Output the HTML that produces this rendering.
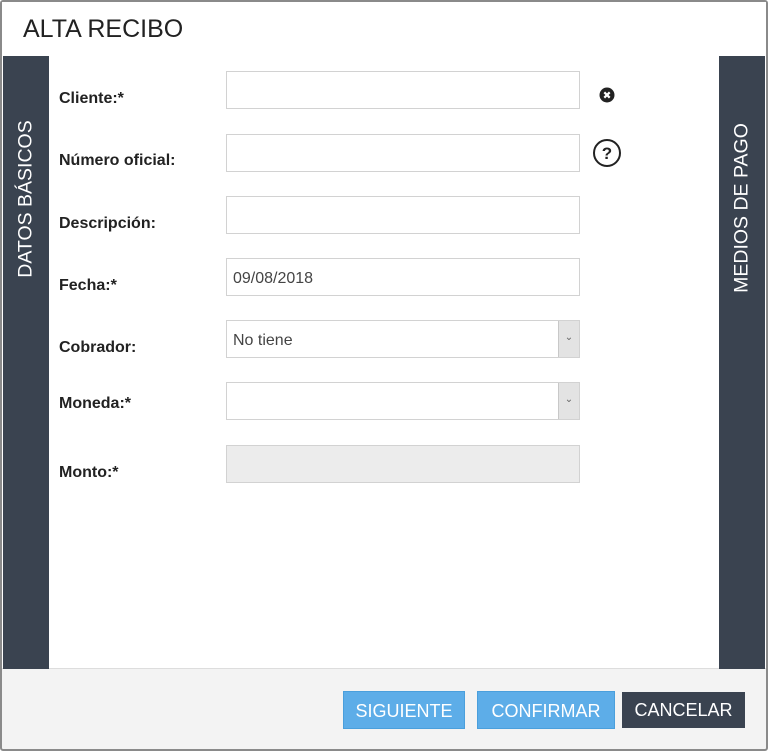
<!DOCTYPE html>
<html><head><style>
*{box-sizing:border-box;margin:0;padding:0}
body{width:768px;height:751px;background:#fff;font-family:"Liberation Sans",sans-serif;position:relative;overflow:hidden}
.win{position:absolute;left:0;top:0;width:768px;height:751px;border:2px solid #8a8a8a;border-radius:3px;background:#f3f3f3}
.hdr{position:absolute;left:0;top:0;width:764px;height:55px;background:#fff;border-bottom:1px solid #e6e6e6}
.hdr span{position:absolute;left:21px;top:13px;font-size:25px;color:#222}
.main{position:absolute;left:2px;top:55px;width:764px;height:614px;background:#fff;border-bottom:1px solid #ddd}
.side{position:absolute;top:56px;width:46px;height:613px;background:#3a4350;color:#fff;font-size:19.5px}
.side span{position:absolute;white-space:nowrap;left:50%;top:50%}
.l{left:3px}.l span{transform:translate(-50%,-50%) rotate(-90deg);margin-top:-164px}
.r{left:719px}.r span{transform:translate(-50%,-50%) rotate(-90deg);margin-top:-155px}
.lab{position:absolute;left:59px;font-size:16px;font-weight:bold;color:#222}
.in{position:absolute;left:226px;width:354px;height:38px;border:1px solid #d2d2d2;background:#fff;font-size:16px;color:#444;padding:11px 0 0 6px}
.dd{position:absolute;right:0;top:0;width:21px;height:36px;background:#e3e3e3;border-left:1px solid #c8c8c8;font-size:10px;color:#666;text-align:center;line-height:34px}
.btn{position:absolute;top:691px;height:38px;color:#fff;font-size:18px;text-align:center;line-height:38px}
</style></head><body>
<div class="win">
<div class="hdr"><span>ALTA RECIBO</span></div>
</div>
<div class="main"></div>
<div class="side l"><span>DATOS BÁSICOS</span></div>
<div class="side r"><span>MEDIOS DE PAGO</span></div>

<div class="lab" style="top:90px">Cliente:*</div>
<div class="lab" style="top:152px">Número oficial:</div>
<div class="lab" style="top:215px">Descripción:</div>
<div class="lab" style="top:277px">Fecha:*</div>
<div class="lab" style="top:339px">Cobrador:</div>
<div class="lab" style="top:395px">Moneda:*</div>
<div class="lab" style="top:464px">Monto:*</div>

<div class="in" style="top:71px"></div>
<div class="in" style="top:134px"></div>
<div class="in" style="top:196px"></div>
<div class="in" style="top:258px">09/08/2018</div>
<div class="in" style="top:320px">No tiene<div class="dd">&#8964;</div></div>
<div class="in" style="top:382px"><div class="dd">&#8964;</div></div>
<div class="in" style="top:445px;background:#ececec"></div>

<svg style="position:absolute;left:599px;top:87px" width="16" height="16" viewBox="0 0 16 16"><circle cx="8" cy="8" r="7.5" fill="#222"/><path d="M5.3 5.3L10.7 10.7M10.7 5.3L5.3 10.7" stroke="#fff" stroke-width="2.2"/></svg>
<svg style="position:absolute;left:592px;top:138px" width="30" height="30" viewBox="0 0 30 30"><circle cx="15" cy="15" r="13" fill="#fff" stroke="#222" stroke-width="2"/><text x="15" y="21" text-anchor="middle" font-family="Liberation Sans" font-weight="bold" font-size="17" fill="#222">?</text></svg>

<div class="btn" style="left:343px;width:122px;background:#5dade8;border:1px solid #4a9fdc">SIGUIENTE</div>
<div class="btn" style="left:477px;width:138px;background:#5dade8;border:1px solid #4a9fdc">CONFIRMAR</div>
<div class="btn" style="left:622px;width:123px;top:692px;height:36px;line-height:36px;background:#3a4350">CANCELAR</div>
</body></html>
